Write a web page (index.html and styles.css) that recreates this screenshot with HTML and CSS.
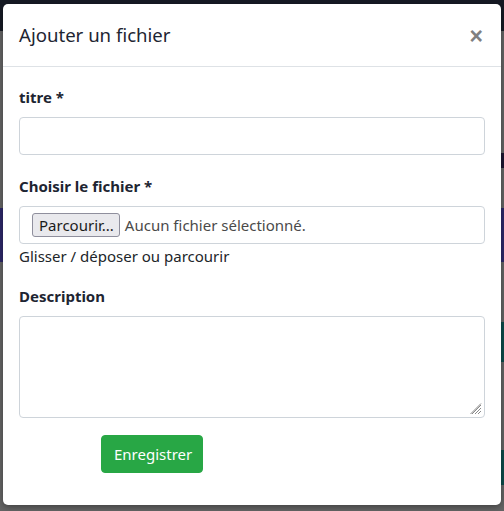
FILE: index.html
```html
<!DOCTYPE html>
<html lang="fr">
<head>
<meta charset="utf-8">
<title>Ajouter un fichier</title>
<link rel="stylesheet" href="styles.css">
</head>
<body>
<div class="backdrop">
  <div class="bg-top"></div>
  <div class="bg-band bg-dark-purple"></div>
  <div class="bg-band bg-purple"></div>
  <div class="bg-band bg-teal1"></div>
  <div class="bg-band bg-teal2"></div>
</div>
<div class="modal">
  <div class="modal-header">
    <h5 class="modal-title">Ajouter un fichier</h5>
    <button class="close" type="button" aria-label="Fermer">×</button>
  </div>
  <div class="modal-body">
    <div class="form-group form-group-first">
      <label class="label">titre *</label>
      <div class="form-control"></div>
    </div>
    <div class="form-group">
      <label class="label">Choisir le fichier *</label>
      <div class="form-control file-control">
        <span class="file-btn">Parcourir...</span>
        <span class="file-text">Aucun fichier sélectionné.</span>
      </div>
      <div class="help">Glisser / déposer ou parcourir</div>
    </div>
    <div class="form-group form-group-last">
      <label class="label">Description</label>
      <div class="form-control textarea">
        <svg class="grip" width="12" height="12" viewBox="0 0 12 12">
          <path d="M11 2 L2 11 M11 5 L5 11 M11 8 L8 11 M11 0.5 L0.5 11" stroke="#8a8a8a" stroke-width="1"/>
        </svg>
      </div>
    </div>
    <div class="actions">
      <button class="btn-success" type="button">Enregistrer</button>
    </div>
  </div>
</div>
</body>
</html>
```
FILE: styles.css
```css
* { box-sizing: border-box; }
html, body {
  margin: 0;
  padding: 0;
  width: 504px;
  height: 511px;
  overflow: hidden;
}
body {
  background: #646464;
  font-family: "Noto Sans", "Open Sans", sans-serif;
  color: #212529;
  position: relative;
}
.backdrop {
  position: absolute;
  inset: 0;
}
.bg-top {
  position: absolute;
  left: 0; top: 0; width: 504px; height: 31px;
  background: #161a24;
}
.bg-band { position: absolute; }
.bg-dark-purple { right: 0; width: 10px; top: 153px; height: 15px; background: #1d1530; }
.bg-purple { left: 0; width: 504px; top: 208px; height: 54px; background: #2c2868; }
.bg-teal1 { right: 0; width: 10px; top: 322px; height: 40px; background: #0c4a4a; }
.bg-teal2 { right: 0; width: 10px; top: 450px; height: 35px; background: #0c4a4a; }

.modal {
  position: absolute;
  left: 3px;
  top: 4px;
  width: 498px;
  height: 501px;
  background: #fff;
  border-radius: 5px;
  box-shadow: 0 2px 6px rgba(0,0,0,.35);
}
.modal-header {
  display: flex;
  align-items: flex-start;
  justify-content: space-between;
  padding: 16px;
  border-bottom: 1px solid #dee2e6;
}
.modal-title {
  margin: 0;
  font-size: 18.6px;
  font-weight: 400;
  line-height: 30px;
  color: #1e2532;
}
.close {
  border: 0;
  background: transparent;
  padding: 2px 0 0;
  margin: 0 2px 0 0;
  font-family: "Liberation Sans", sans-serif;
  font-size: 23px;
  font-weight: 700;
  line-height: 28px;
  color: #808080;
}
.modal-body {
  padding: 18px 16px 16px;
}
.form-group { margin-bottom: 16px; }
.form-group-first { margin-bottom: 19px; }
.form-group-last { margin-bottom: 17px; }
.label {
  display: block;
  font-weight: 700;
  font-size: 15px;
  line-height: 24px;
  margin-bottom: 8px;
  color: #1e2532;
}
.form-control {
  width: 466px;
  height: 38px;
  border: 1px solid #ced4da;
  border-radius: 4px;
  background: #fff;
}
.file-control {
  display: flex;
  align-items: center;
  padding: 0 12px;
  gap: 5px;
  font-size: 15px;
}
.file-btn {
  background: #e9e9ed;
  border: 1px solid #8f8f9d;
  border-radius: 3px;
  padding: 0 5px 0 6px;
  line-height: 22px;
  color: #1b1b1b;
}
.file-text { color: #4a4a4a; }
.help {
  font-size: 15px;
  line-height: 24px;
  color: #212529;
  margin-top: 0;
}
.textarea {
  height: 102px;
  position: relative;
}
.grip {
  position: absolute;
  right: 2px;
  bottom: 2px;
}
.actions {
  padding-left: 82px;
}
.btn-success {
  background: #28a745;
  border: 1px solid #28a745;
  color: #fff;
  border-radius: 4px;
  font-family: "Noto Sans", "Open Sans", sans-serif;
  font-size: 15px;
  line-height: 24px;
  padding: 6px 12px;
  width: 102px;
  height: 38px;
}
```
